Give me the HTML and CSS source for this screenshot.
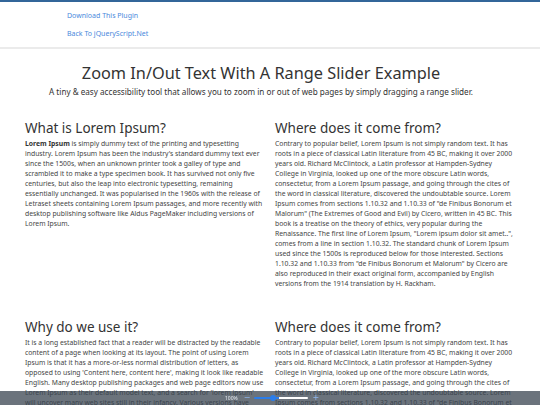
FILE: index.html
```html
<!DOCTYPE html>
<html lang="en">
<head>
    <meta charset="UTF-8">
    <meta name="viewport" content="width=device-width, initial-scale=1.0">
    <title>Zoom In/Out Text With A Range Slider Example</title>
    <link rel="stylesheet" href="styles.css">
</head>
<body>
    <div class="script-menu">
        <a href="#" class="menu-link">Download This Plugin</a>
        <a href="#" class="menu-link">Back To jQueryScript.Net</a>
    </div>

    <div class="page-head">
        <h1 class="title">Zoom In/Out Text With A Range Slider Example</h1>
        <p class="lead">A tiny &amp; easy accessibility tool that allows you to zoom in or out of web pages by simply dragging a range slider.</p>
    </div>

    <div class="content">
        <div class="section">
            <h2>What is Lorem Ipsum?</h2>
            <p><strong>Lorem Ipsum</strong> is simply dummy text of the printing and typesetting industry. Lorem Ipsum has been the industry's standard dummy text ever since the 1500s, when an unknown printer took a galley of type and scrambled it to make a type specimen book. It has survived not only five centuries, but also the leap into electronic typesetting, remaining essentially unchanged. It was popularised in the 1960s with the release of Letraset sheets containing Lorem Ipsum passages, and more recently with desktop publishing software like Aldus PageMaker including versions of Lorem Ipsum.</p>
        </div>
        <div class="section">
            <h2>Where does it come from?</h2>
            <p>Contrary to popular belief, Lorem Ipsum is not simply random text. It has roots in a piece of classical Latin literature from 45 BC, making it over 2000 years old. Richard McClintock, a Latin professor at Hampden-Sydney College in Virginia, looked up one of the more obscure Latin words, consectetur, from a Lorem Ipsum passage, and going through the cites of the word in classical literature, discovered the undoubtable source. Lorem Ipsum comes from sections 1.10.32 and 1.10.33 of "de Finibus Bonorum et Malorum" (The Extremes of Good and Evil) by Cicero, written in 45 BC. This book is a treatise on the theory of ethics, very popular during the Renaissance. The first line of Lorem Ipsum, "Lorem ipsum dolor sit amet..", comes from a line in section 1.10.32. The standard chunk of Lorem Ipsum used since the 1500s is reproduced below for those interested. Sections 1.10.32 and 1.10.33 from "de Finibus Bonorum et Malorum" by Cicero are also reproduced in their exact original form, accompanied by English versions from the 1914 translation by H. Rackham.</p>
        </div>
        <div class="section">
            <h2>Why do we use it?</h2>
            <p>It is a long established fact that a reader will be distracted by the readable content of a page when looking at its layout. The point of using Lorem Ipsum is that it has a more-or-less normal distribution of letters, as opposed to using 'Content here, content here', making it look like readable English. Many desktop publishing packages and web page editors now use Lorem Ipsum as their default model text, and a search for 'lorem ipsum' will uncover many web sites still in their infancy. Various versions have evolved over the years, sometimes by accident, sometimes on purpose (injected humour and the like).</p>
        </div>
        <div class="section">
            <h2>Where does it come from?</h2>
            <p>Contrary to popular belief, Lorem Ipsum is not simply random text. It has roots in a piece of classical Latin literature from 45 BC, making it over 2000 years old. Richard McClintock, a Latin professor at Hampden-Sydney College in Virginia, looked up one of the more obscure Latin words, consectetur, from a Lorem Ipsum passage, and going through the cites of the word in classical literature, discovered the undoubtable source. Lorem Ipsum comes from sections 1.10.32 and 1.10.33 of "de Finibus Bonorum et Malorum" (The Extremes of Good and Evil) by Cicero, written in 45 BC.</p>
        </div>
    </div>

    <div class="zoom-bar">
        <span class="zoom-value">100%</span>
        <button class="zoom-btn" type="button">&minus;</button>
        <input type="range" class="zoom-range" min="50" max="200" value="100">
        <button class="zoom-btn zoom-plus" type="button">+</button>
    </div>
</body>
</html>
```

FILE: styles.css
```css
* {
    margin: 0;
    padding: 0;
    box-sizing: border-box;
}

body {
    font-family: "Noto Sans", "Open Sans", sans-serif;
    color: #444;
    background: #fff;
    padding-bottom: 40px;
}

.script-menu {
    border-top: 2px solid #336699;
    border-bottom: 2px solid #ebebeb;
    padding: 5px 0 4px 67px;
}

.menu-link {
    display: block;
    font-size: 7px;
    line-height: 18px;
    color: #4a89dc;
    text-decoration: none;
}

.page-head {
    padding-right: 18px;
    text-align: center;
    color: #333;
}

.title {
    margin-top: 12px;
    font-size: 16.3px;
    line-height: 24px;
    font-weight: 400;
}

.lead {
    margin-top: 1px;
    font-size: 8.15px;
    line-height: 12px;
}

.content {
    display: grid;
    grid-template-columns: 241px 241px;
    column-gap: 9px;
    row-gap: 30px;
    margin-top: 22px;
    padding-left: 25px;
}

.section h2 {
    font-size: 13.5px;
    line-height: 16px;
    font-weight: 400;
    color: #333;
    margin-bottom: 3px;
}

.section p {
    font-size: 6.8px;
    line-height: 10px;
    color: #444;
}

.section strong {
    color: #333;
}

.zoom-bar {
    position: fixed;
    left: 0;
    right: 0;
    bottom: 0;
    height: 14px;
    background: rgba(58, 68, 80, 0.75);
    display: flex;
    align-items: center;
    justify-content: center;
    gap: 4px;
    padding-left: 4px;
}

.zoom-value {
    font-size: 5px;
    color: #e8edf3;
    margin-right: 2px;
}

.zoom-btn {
    border: none;
    background: none;
    color: #8fb8ee;
    font-family: "DejaVu Sans", sans-serif;
    font-size: 8px;
    line-height: 8px;
    cursor: pointer;
}

.zoom-range {
    -webkit-appearance: none;
    appearance: none;
    width: 54px;
    height: 2px;
    border-radius: 1px;
    background: linear-gradient(to right, #2b7de9 0%, #2b7de9 46%, #fff 46%, #fff 100%);
    outline: none;
}

.zoom-range::-webkit-slider-thumb {
    -webkit-appearance: none;
    appearance: none;
    width: 6px;
    height: 6px;
    border-radius: 50%;
    background: #2b7de9;
    cursor: pointer;
}
```
